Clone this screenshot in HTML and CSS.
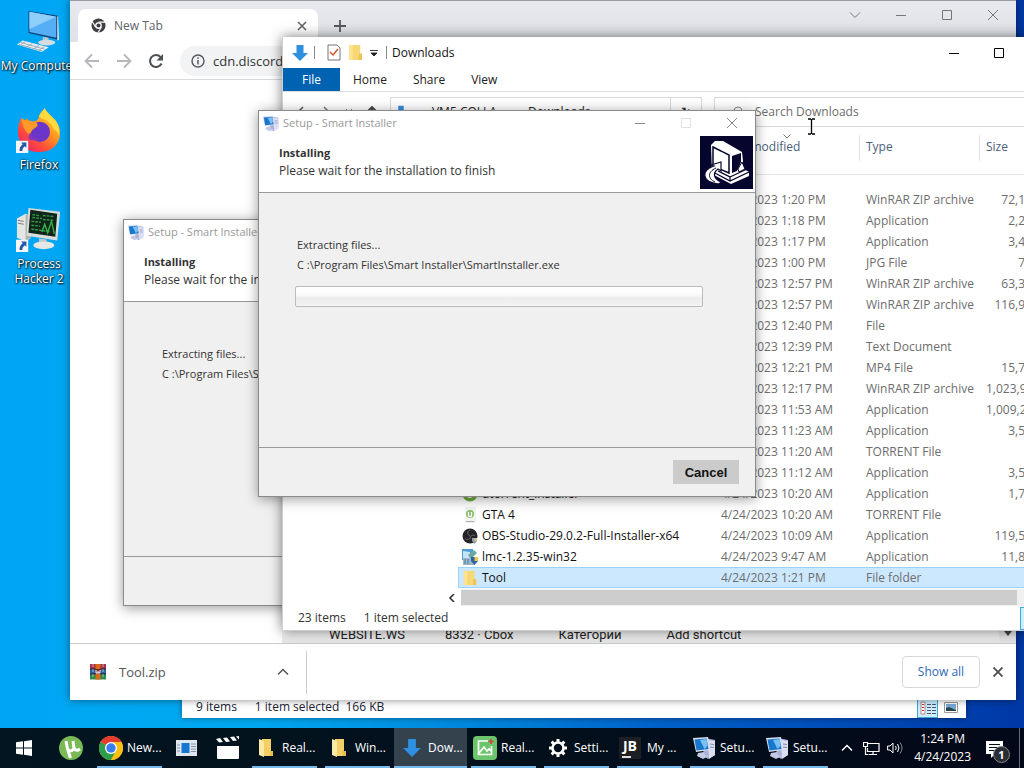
FILE: index.html
```html
<!DOCTYPE html>
<html lang="en">
<head>
<meta charset="utf-8">
<title>Desktop</title>
<link rel="stylesheet" href="styles.css">
</head>
<body>
<svg class="defs" aria-hidden="true">
  <defs>
    <linearGradient id="fox" x1="1" y1="0" x2="0.2" y2="1"><stop offset="0" stop-color="#fff04a"/><stop offset="0.45" stop-color="#ff9a1f"/><stop offset="0.75" stop-color="#ff4a3c"/><stop offset="1" stop-color="#e8246b"/></linearGradient>
    <symbol id="i-setup" viewBox="0 0 24 24">
      <path d="M13 2l10 2v15l-7 4-5-4z" fill="#a9afd6"/><path d="M16 4l7 1v14l-6 4z" fill="#dcdff2"/>
      <path d="M18 8l4 .5M18 11l4 .5" stroke="#7d86b5"/>
      <path d="M1 2l15-1 2 13-14 2z" fill="#d8ddf0"/><path d="M2.500 3.500l12-1 2 10.500-12 1.500z" fill="#1777cc"/><path d="M8 4l6.500-1 1 7-3 3z" fill="#79c1f5"/>
      <path d="M6 17l6-1 1 3 4 1-6 3-6-3z" fill="#c4c9e4"/>
    </symbol>
    <symbol id="i-down" viewBox="0 0 18 18"><path d="M5.500 1h7v8H17l-8 8-8-8h4.500z" fill="#2f8fe0"/></symbol>
    <symbol id="i-folder" viewBox="0 0 16 18"><path d="M1 1h12v16H1z" fill="#f7d774"/><path d="M1 1h4v16H1z" fill="#fbe391"/><path d="M12 10h3v7h-4z" fill="#eec455"/></symbol>
    <symbol id="i-folder-open" viewBox="0 0 16 20"><path d="M4 1h9v12l2 2v3H4z" fill="#f4cf66"/><path d="M1 1l5 2v16l-5-2z" fill="#fbe9a6"/><path d="M12 13h3v5h-3z" fill="#e9bb4c"/></symbol>
    <symbol id="i-close" viewBox="0 0 12 12"><path d="M1 1l10 10M11 1L1 11" fill="none" stroke="currentColor"/></symbol>
    <symbol id="i-max" viewBox="0 0 12 12"><path d="M1.500 1.500h9v9h-9z" fill="none" stroke="currentColor"/></symbol>
    <symbol id="i-min" viewBox="0 0 12 12"><path d="M1 6.500h10" stroke="currentColor"/></symbol>
    <symbol id="i-chev" viewBox="0 0 12 12"><path d="M1 3.500l5 5 5-5" fill="none" stroke="currentColor"/></symbol>
    <symbol id="i-up" viewBox="0 0 12 12"><path d="M1 8.500l5-5 5 5" fill="none" stroke="currentColor" stroke-width="1.500"/></symbol>
    <symbol id="i-back" viewBox="0 0 16 16"><path d="M15 8H2M8 1.500L1.500 8 8 14.500" fill="none" stroke="currentColor" stroke-width="1.800"/></symbol>
    <symbol id="i-shortcut" viewBox="0 0 12 12"><path d="M0 0h12v12H0z" fill="#f4f6f8"/><path d="M5 2h5v5L8.500 5.500Q6 7 6 10H3.500Q3 6 6.500 3.500z" fill="#2458a8"/></symbol>
  </defs>
</svg>
<main class="desktop">
  <ul class="shortcuts">
    <li>
      <svg class="big" viewBox="0 0 48 48"><path d="M13 3l31 5v25L13 26z" fill="#0d3f78"/><path d="M14 4l28 5v22L14 25z" fill="#56aef4"/><path d="M14 4l28 5L14 22z" fill="#8fd0fb"/><path d="M44 8l1 25-2 1V9z" fill="#cfdce6"/><path d="M28 30l6 1v4h-6z" fill="#b9c4cd"/><ellipse cx="32" cy="36" rx="9" ry="3" fill="#d5dde3"/><path d="M1 38l6-4 27 7-7 5z" fill="#e9eef2"/><path d="M5 36l25 7M3 38l25 7M10 35l-5 3M17 37l-6 4M24 39l-6 4M30 40l-6 4" stroke="#9babb8" fill="none"/></svg>
      <span class="nowrap">My Computer</span>
    </li>
    <li>
      <svg class="big" viewBox="0 0 48 48"><path d="M24 47C10 47 2 37 2 26 2 20 3 15 6 11l3 5 2-4c2 2 5 3 8 3 4-1 5-4 5-6 2-4 5-6 6-8 1 4 5 6 8 10 5 4 8 10 8 16 0 12-9 20-22 20z" fill="url(#fox)"/><path d="M30 1c1 4 5 6 8 10 5 4 8 10 7 19-2-5-4-6-6-7-2-9-12-10-15-13 2-5 5-6 6-9z" fill="#ffd93d"/><circle cx="25" cy="26" r="10.500" fill="#6a35c8"/><path d="M6 12c6 3 12 3 15 4 2 2 2 4 0 5l-4 3-3 5c-5-4-8-10-8-17z" fill="#ff9a28"/><path d="M14 27c2 4 6 6 11 5-3 3-8 4-12 1z" fill="#8038c0"/><use href="#i-shortcut" x="0" y="35" width="13" height="13"/></svg>
      <span>Firefox</span>
    </li>
    <li>
      <svg class="big" viewBox="0 0 48 48"><path d="M1 13l9-5 5 2v24l-5 3-9-4z" fill="#e4e6e4"/><path d="M10 9l5 1v24l-5 3z" fill="#aeb4b0"/><path d="M2 15l6 1M2 18l6 1" stroke="#777"/><path d="M13 2l33 4-3 30-32-5z" fill="#d9ddd9"/><path d="M15 4l28 4-2 24-28-4z" fill="#10241a"/><path d="M17 9l8 1M17 12l10 1M16 16l10 1M16 20l9 1M16 24l20 3M28 10l12 1M28 14l11 1" stroke="#2f9a45" stroke-width="1.500" stroke-dasharray="3 1"/><path d="M27 27l3-8 3 9 4-12 3 13" fill="none" stroke="#34b048" stroke-width="1.500"/><path d="M24 34l8 1v5h-8z" fill="#c3c8c4"/><ellipse cx="29" cy="41" rx="11" ry="4" fill="#e4e7e4"/><use href="#i-shortcut" x="0" y="35" width="13" height="13"/></svg>
      <span>Process Hacker 2</span>
    </li>
  </ul>

  <section class="window realfolder" aria-label="Folder">
    <footer class="rf-status">
      <span class="rf-count">9 items</span><span>1 item selected</span><span>166 KB</span>
      <span class="rf-views">
        <button class="view-btn on" aria-label="Details view"><svg width="18" height="14" viewBox="0 0 18 14"><path d="M2 1h4v12H2z" fill="#fff" stroke="#b88"/><path d="M3 3.500h2M3 6.500h2M3 9.500h2" stroke="#b33"/><path d="M8 3.500h4M13 3.500h4M8 6.500h4M13 6.500h4M8 9.500h4M13 9.500h4M8 12.500h4M13 12.500h4" stroke="#557"/></svg></button>
        <button class="view-btn" aria-label="Large icons"><svg width="14" height="12" viewBox="0 0 14 12"><path d="M.5.5h13v10H.5z" fill="#fff" stroke="#999"/><path d="M2 2h10v7H2z" fill="#79a9d8"/><path d="M2 6l3-1 7 3v1H2z" fill="#23484c"/></svg></button>
      </span>
    </footer>
  </section>

  <section class="window chrome" aria-label="New Tab">
    <header class="tabstrip">
      <div class="tab">
        <svg width="15" height="15" viewBox="0 0 16 16"><circle cx="8" cy="8" r="7.500" fill="#3c4043"/><circle cx="8" cy="8" r="3.600" fill="#fff"/><circle cx="8" cy="8" r="2.200" fill="#3c4043"/><path d="M8 4.400h7M4.900 9.800L1.500 4M11.100 9.800L7.500 15.500" stroke="#fff" stroke-width="1.200"/></svg>
        <span class="tab-title">New Tab</span>
        <button class="plain" aria-label="Close tab"><svg width="10" height="10" viewBox="0 0 10 10"><path d="M1 1l8 8M9 1L1 9" stroke="#5f6368" stroke-width="1.600"/></svg></button>
      </div>
      <button class="plain newtab" aria-label="New tab"><svg width="12" height="12" viewBox="0 0 12 12"><path d="M6 0v12M0 6h12" stroke="#55595e" stroke-width="1.800"/></svg></button>
      <div class="chrome-ctl">
        <button class="plain" aria-label="Search tabs"><svg width="12" height="12"><use href="#i-chev"/></svg></button>
        <button class="plain" aria-label="Minimize"><svg width="12" height="12"><use href="#i-min"/></svg></button>
        <button class="plain" aria-label="Maximize"><svg width="12" height="12"><use href="#i-max"/></svg></button>
        <button class="plain" aria-label="Close"><svg width="12" height="12"><use href="#i-close"/></svg></button>
      </div>
    </header>
    <div class="toolbar">
      <button class="plain dim" aria-label="Back"><svg width="16" height="16"><use href="#i-back"/></svg></button>
      <button class="plain dim flip" aria-label="Forward"><svg width="16" height="16"><use href="#i-back"/></svg></button>
      <button class="plain" aria-label="Reload"><svg width="16" height="16" viewBox="0 0 16 16"><path d="M13.500 10.500A6 6 0 1 1 12.500 4" fill="none" stroke="#4c5054" stroke-width="2"/><path d="M15 1v6.500H8.500z" fill="#4c5054"/></svg></button>
      <label class="omni"><svg width="14" height="14" viewBox="0 0 14 14"><circle cx="7" cy="7" r="6" fill="none" stroke="#55595e" stroke-width="1.400"/><path d="M7 6v4.500M7 3.200v1.500" stroke="#55595e" stroke-width="1.500"/></svg><input type="text" value="cdn.discord" aria-label="Address"></label>
    </div>
    <div class="page">
      <nav class="tiles"><a href="#">WEBSITE.WS</a><a href="#">8332 · Cbox</a><a href="#">Категории</a><a href="#">Add shortcut</a></nav>
      <div class="page-scroll"><svg width="8" height="5" viewBox="0 0 8 5"><path d="M0 0h8L4 5z" fill="#444"/></svg></div>
    </div>
    <footer class="downloads-bar">
      <div class="dl-item">
        <svg width="16" height="16" viewBox="0 0 16 16"><path d="M0 0h16v5H0z" fill="#a8324a"/><path d="M0 5h16v5H0z" fill="#2f5fb0"/><path d="M0 10h16v5.500H0z" fill="#2d8a4a"/><path d="M0 5h16M0 10h16" stroke="#1c1c2c"/><path d="M3 0v16M13 0v16" stroke="#ddd" stroke-width=".7" stroke-dasharray="3 2"/><path d="M5.500 0h5v15.500h-5z" fill="#d96a1c"/><path d="M5 5h6v5H5z" fill="#6a2c20"/><path d="M6 6v3h4V6M8 7v2" fill="none" stroke="#fff"/></svg>
        <span class="dl-name">Tool.zip</span>
        <button class="plain" aria-label="More"><svg width="12" height="12"><use href="#i-up"/></svg></button>
      </div>
      <button class="showall">Show all</button>
      <button class="plain dl-close" aria-label="Close"><svg width="10" height="10" viewBox="0 0 10 10"><path d="M.5.5l9 9M9.500.5l-9 9" stroke="#4a4e52" stroke-width="1.800"/></svg></button>
    </footer>
  </section>

  <section class="window dialog dialog-back" aria-label="Setup - Smart Installer">
    <header class="dlg-title"><svg width="17" height="17"><use href="#i-setup"/></svg><span>Setup - Smart Installer</span></header>
    <div class="dlg-head"><div class="dlg-text"><h2>Installing</h2><p>Please wait for the installation to finish</p></div></div>
    <div class="dlg-body"><p>Extracting files...</p><p>C :\Program Files\Smart Installer\SmartInstaller.exe</p></div>
    <div class="dlg-foot"></div>
  </section>

  <section class="window explorer" aria-label="Downloads">
    <header class="ex-title">
      <svg width="18" height="18"><use href="#i-down"/></svg><i class="bar"></i>
      <svg class="q" width="14" height="17" viewBox="0 0 14 17"><path d="M1 1h9l3 3v12H1z" fill="#fff" stroke="#777"/><path d="M3 8l3 3 5-6" fill="none" stroke="#d2552d" stroke-width="1.500"/></svg>
      <svg class="q" width="15" height="17"><use href="#i-folder"/></svg>
      <svg class="q" width="8" height="8" viewBox="0 0 8 8"><path d="M0 1.500h8M1 4h6L4 7z" stroke="#222" fill="#222" stroke-width=".9"/></svg>
      <i class="bar"></i><span class="ex-name">Downloads</span>
      <span class="ex-ctl"><button class="plain" aria-label="Minimize"><svg width="12" height="12"><use href="#i-min"/></svg></button><button class="plain" aria-label="Maximize"><svg width="12" height="12"><use href="#i-max"/></svg></button></span>
    </header>
    <nav class="ribbon"><button class="file">File</button><button>Home</button><button>Share</button><button>View</button></nav>
    <div class="addr-row">
      <div class="arrows">
        <svg width="12" height="12" viewBox="0 0 12 12"><path d="M8 1L3 6l5 5" fill="none" stroke="#555" stroke-width="1.500"/></svg>
        <svg width="12" height="12" viewBox="0 0 12 12"><path d="M4 1l5 5-5 5" fill="none" stroke="#777" stroke-width="1.500"/></svg>
        <svg width="8" height="12" viewBox="0 0 8 12"><path d="M1 3l3 3 3-3" fill="none" stroke="#777"/></svg>
        <svg width="12" height="12" viewBox="0 0 12 12"><path d="M6 12V2M1 6l5-5 5 5" fill="none" stroke="#444" stroke-width="1.800"/></svg>
      </div>
      <div class="crumbs"><svg width="14" height="18"><use href="#i-down"/></svg><span>«</span><span>VM5 COLLA...</span><span>›</span><span>Downloads</span><span>›</span><span class="refresh">↻</span></div>
      <label class="search"><svg width="12" height="12" viewBox="0 0 12 12"><circle cx="7" cy="5" r="4" fill="none" stroke="#888"/><path d="M4 8l-3 3" stroke="#888"/></svg><input type="text" placeholder="Search Downloads" aria-label="Search Downloads"></label>
    </div>
    <div class="files">
      <table>
        <thead><tr><th class="n">Name</th><th class="d">Date modified<svg class="sort" width="8" height="5" viewBox="0 0 8 5"><path d="M.5.5L4 4 7.500.5" fill="none" stroke="#777"/></svg></th><th class="t">Type</th><th class="s">Size</th></tr></thead>
        <tbody>
          <tr><td></td><td>4/24/2023 1:20 PM</td><td>WinRAR ZIP archive</td><td>72,106 KB</td></tr>
          <tr><td></td><td>4/24/2023 1:18 PM</td><td>Application</td><td>2,216 KB</td></tr>
          <tr><td></td><td>4/24/2023 1:17 PM</td><td>Application</td><td>3,496 KB</td></tr>
          <tr><td></td><td>4/24/2023 1:00 PM</td><td>JPG File</td><td>796 KB</td></tr>
          <tr><td></td><td>4/24/2023 12:57 PM</td><td>WinRAR ZIP archive</td><td>63,396 KB</td></tr>
          <tr><td></td><td>4/24/2023 12:57 PM</td><td>WinRAR ZIP archive</td><td>116,986 KB</td></tr>
          <tr><td></td><td>4/24/2023 12:40 PM</td><td>File</td><td>16 KB</td></tr>
          <tr><td></td><td>4/24/2023 12:39 PM</td><td>Text Document</td><td>1 KB</td></tr>
          <tr><td></td><td>4/24/2023 12:21 PM</td><td>MP4 File</td><td>15,766 KB</td></tr>
          <tr><td></td><td>4/24/2023 12:17 PM</td><td>WinRAR ZIP archive</td><td>1,023,996 KB</td></tr>
          <tr><td></td><td>4/24/2023 11:53 AM</td><td>Application</td><td>1,009,296 KB</td></tr>
          <tr><td></td><td>4/24/2023 11:23 AM</td><td>Application</td><td>3,506 KB</td></tr>
          <tr><td></td><td>4/24/2023 11:20 AM</td><td>TORRENT File</td><td>9 KB</td></tr>
          <tr><td></td><td>4/24/2023 11:12 AM</td><td>Application</td><td>3,506 KB</td></tr>
          <tr><td><svg width="16" height="16" viewBox="0 0 16 16"><circle cx="8" cy="8" r="7.500" fill="#6fae3c"/><path d="M5 4v6q3 2 5 0V4" fill="none" stroke="#fff" stroke-width="2"/></svg>utorrent_installer</td><td>4/24/2023 10:20 AM</td><td>Application</td><td>1,736 KB</td></tr>
          <tr><td><svg width="16" height="16" viewBox="0 0 16 16"><path d="M3 0h11v16H3z" fill="#f1f3f0"/><circle cx="8" cy="7" r="4" fill="#8bbd68"/><path d="M6.500 5v4q2 1 3 0V5" fill="none" stroke="#fff" stroke-width="1.300"/><path d="M4 14.500h8" stroke="#a9b0a6"/></svg>GTA 4</td><td>4/24/2023 10:20 AM</td><td>TORRENT File</td><td>16 KB</td></tr>
          <tr><td><svg width="16" height="16" viewBox="0 0 16 16"><circle cx="8" cy="8" r="7.500" fill="#242427"/><path d="M8 2c-3 1-3 5 0 6M13 8c-2-2-5 0-5 3M3 10c1 2 4 2 5 0" fill="none" stroke="#6c6d73"/><path d="M10 10h5v3l-2.500 3-2.500-3z" fill="#8c9fc0"/><path d="M12.500 10H15v3h-2.500z" fill="#d8c070"/></svg>OBS-Studio-29.0.2-Full-Installer-x64</td><td>4/24/2023 10:09 AM</td><td>Application</td><td>119,536 KB</td></tr>
          <tr><td><svg width="16" height="16" viewBox="0 0 16 16"><path d="M0 0h11v11H0z" fill="#4f9bd8"/><path d="M1 2l7 1v6H1z" fill="#c4e4f7"/><path d="M1 9h12v7H1z" fill="#9fb6c4"/><path d="M3 10v5M6 10v5" stroke="#4a7fae"/><path d="M6 6l6-5 3 3-6 6z" fill="#6da8a0"/><path d="M9 8h7v4l-3.500 4L9 12z" fill="#2c63a5"/><path d="M12.500 8H16v4h-3.500z" fill="#e8c848"/></svg>lmc-1.2.35-win32</td><td>4/24/2023 9:47 AM</td><td>Application</td><td>11,866 KB</td></tr>
          <tr class="sel"><td><svg width="16" height="16"><use href="#i-folder"/></svg>Tool</td><td>4/24/2023 1:21 PM</td><td>File folder</td><td></td></tr>
        </tbody>
      </table>
      <div class="hscroll"><svg width="8" height="8" viewBox="0 0 8 8"><path d="M6 0L2 4l4 4" fill="none" stroke="#333" stroke-width="1.600"/></svg><i class="thumb"></i></div>
    </div>
    <footer class="ex-status"><span>23 items</span><span>1 item selected</span><i class="ex-view"></i></footer>
  </section>

  <section class="window dialog dialog-front" aria-label="Setup - Smart Installer">
    <header class="dlg-title"><svg width="17" height="17"><use href="#i-setup"/></svg><span>Setup - Smart Installer</span>
      <div class="dlg-ctl"><button class="plain" aria-label="Minimize"><svg width="12" height="12"><use href="#i-min"/></svg></button><button class="plain off" aria-label="Maximize" disabled><svg width="12" height="12"><use href="#i-max"/></svg></button><button class="plain" aria-label="Close"><svg width="12" height="12"><use href="#i-close"/></svg></button></div>
    </header>
    <div class="dlg-head"><div class="dlg-text"><h2>Installing</h2><p>Please wait for the installation to finish</p></div>
      <svg class="dlg-logo" width="53" height="53" viewBox="0 0 53 53"><path d="M0 0h53v53H0z" fill="#05052e"/><path d="M11 9l4-4h8l19 11 1 9-1 7 7 4v4L31 48 12 38z" fill="#fff"/><path d="M13 11l16 8v18l-16-7z" fill="#fff" stroke="#05052e" stroke-width="1.500"/><path d="M32 20l9-3v9l-4 9-5 2z" fill="#05052e"/><path d="M38 33l4-7 3 7-6 3z" fill="#fff" stroke="#05052e"/><path d="M13 36l17 9 19-9M30 45v-4L18 35M30 41l17-8" fill="none" stroke="#05052e" stroke-width="1.300"/><path d="M11 29l10-3v9l-3-2c-6 4-4 10 3 13l-2 2C1 46 1 34 14 30z" fill="#fff" stroke="#05052e" stroke-width="1.200"/><path d="M16 32c-9 4-8 11-1 14" fill="none" stroke="#05052e"/></svg>
    </div>
    <div class="dlg-body"><p>Extracting files...</p><p>C :\Program Files\Smart Installer\SmartInstaller.exe</p><div class="progress" role="progressbar" aria-valuenow="0" aria-label="Progress"></div></div>
    <div class="dlg-foot"><button class="cancel">Cancel</button></div>
  </section>

  <svg class="cursor" width="9" height="17" viewBox="0 0 9 17"><path d="M1 1h3M5 1h3M4.500 1v15M1 16h3M5 16h3" stroke="#000" fill="none" stroke-width="1.300"/></svg>
</main>

<footer class="taskbar">
  <button class="start" aria-label="Start"><svg width="16" height="16" viewBox="0 0 16 16"><path d="M0 2.300L7 1.300V7.500H0zM8 1.200L16 0v7.500H8zM0 8.500h7v6.200L0 13.700zM8 8.500h8V16l-8-1.200z" fill="#fff"/></svg></button>
  <button class="pin first" aria-label="uTorrent"><svg width="24" height="24" viewBox="0 0 24 24"><circle cx="12" cy="12" r="12" fill="#79b956"/><path d="M7 5l1.500 8q3 4 6.500-.500L14 5M15 12q2 4 6 1M8.500 13l3 9" fill="none" stroke="#fff" stroke-width="3"/></svg></button>
  <button class="task"><svg width="24" height="24" viewBox="0 0 24 24"><circle cx="12" cy="12" r="12" fill="#fbbf12"/><path d="M12 12L1.600 6A12 12 0 0 1 22.400 6z" fill="#e33b2e"/><path d="M12 12L1.600 6A12 12 0 0 0 12 24l5-9z" fill="#2f9e4c"/><path d="M12 6h10.400A12 12 0 0 1 12 24l5-9z" fill="#fbbf12"/><circle cx="12" cy="12" r="6" fill="#fff"/><circle cx="12" cy="12" r="4.700" fill="#3a7df0"/></svg><span>New...</span></button>
  <button class="pin" aria-label="Program"><svg width="21" height="16" viewBox="0 0 21 16"><path d="M0 0h21v16H0z" fill="#dfe6ee"/><path d="M5.500 3h8v10h-8z" fill="#1677d2"/><path d="M1 5h3M1 8h3M1 11h3M15 4h5M15 6.500h5M15 9h5M15 11.500h5" stroke="#8493a8"/></svg></button>
  <button class="pin" aria-label="Clapper"><svg width="24" height="24" viewBox="0 0 24 24"><path d="M1 10h22v12q0 1-1 1H2q-1 0-1-1z" fill="#fff"/><path d="M0 3l4-1 3 4-4 .500zM7 2l4-.500 3 4-4 .500zM14 1l4-.500 3 4-4 .500zM20 .5l3-.500v3.500z" fill="#fff"/></svg></button>
  <button class="task"><svg width="24" height="20"><use href="#i-folder-open"/></svg><span>Real...</span></button>
  <button class="task"><svg width="24" height="20"><use href="#i-folder-open"/></svg><span>Win...</span></button>
  <button class="task active"><svg width="24" height="20"><use href="#i-down"/></svg><span>Dow...</span></button>
  <button class="task"><svg width="24" height="24" viewBox="0 0 24 24"><rect width="24" height="24" rx="4" fill="#6cc46c"/><path d="M15 5H5.500v13.500h13V10M6 17l5-6 3 4 2-2 3 3" fill="none" stroke="#fff" stroke-width="1.700"/><path d="M18 3v5M15.500 5.500h5" stroke="#d04a3a" stroke-width="1.700"/></svg><span>Real...</span></button>
  <button class="task"><svg width="24" height="20" viewBox="0 0 20 20"><circle cx="10" cy="10" r="5.500" fill="none" stroke="#fff" stroke-width="2.600"/><path d="M10 1v3M10 16v3M1 10h3M16 10h3M3.600 3.600l2.200 2.200M14.200 14.200l2.200 2.200M16.400 3.600l-2.200 2.200M5.800 14.200l-2.200 2.200" stroke="#fff" stroke-width="3"/></svg><span>Setti...</span></button>
  <button class="task"><span class="jb">JB</span><span>My ...</span></button>
  <button class="task"><svg width="24" height="24"><use href="#i-setup"/></svg><span>Setu...</span></button>
  <button class="task"><svg width="24" height="24"><use href="#i-setup"/></svg><span>Setu...</span></button>
  <div class="tray">
    <svg width="12" height="12"><use href="#i-up"/></svg>
    <svg width="17" height="15" viewBox="0 0 17 15"><path d="M5 2.500h11v8H4.500V7M10 10.500v3M6 13.500h8M.5 1.500h4v4h-4zM2.500 5.500v8h3" fill="none" stroke="#fff" stroke-width="1.200"/></svg>
    <svg width="17" height="14" viewBox="0 0 17 14"><path d="M.6 5h2.400l3-3v10l-3-3H.6z" fill="none" stroke="#fff"/><path d="M8.500 5q1.500 2 0 4M10.500 3q3 4 0 8" fill="none" stroke="#fff"/><path d="M13 1.500q4 5.500 0 11" fill="none" stroke="#889"/></svg>
    <div class="clock"><span>1:24 PM</span><span>4/24/2023</span></div>
    <button class="notif" aria-label="Notifications"><svg width="17" height="17" viewBox="0 0 17 17"><path d="M0 0h17v13H9l-4 4v-4H0z" fill="#fff"/><path d="M3 3.500h11M3 6.500h11M3 9.500h8" stroke="#06101e" stroke-width="1.200"/></svg><b>1</b></button>
  </div>
</footer>
</body>
</html>
```
FILE: styles.css
```css
* { box-sizing: border-box; }
body {
  margin: 0;
  height: 100vh;
  display: flex;
  flex-direction: column;
  overflow: hidden;
  font: 12px/16px "Open Sans", "Noto Sans", sans-serif;
  color: #222;
}
button, input { font: inherit; color: inherit; border: 0; background: none; padding: 0; margin: 0; }
p, h2, ul { margin: 0; padding: 0; }
svg { display: block; flex: none; }
.defs { position: absolute; width: 0; height: 0; }
.plain { display: grid; place-items: center; }

.desktop {
  flex: 1;
  position: relative;
  overflow: hidden;
  background: linear-gradient(to right, #00a6f4 0, #00a8f0 25%, #0088dc 45%, #0060c8 65%, #0038a6 100%);
}
.window { position: absolute; background: #fff; }

.shortcuts { list-style: none; width: 78px; color: #fff; text-shadow: 1px 1px 2px #000, 0 0 2px #000; }
.shortcuts li { display: flex; flex-direction: column; align-items: center; height: 99px; padding-top: 8px; text-align: center; line-height: 15px; }
.shortcuts .big { width: 46px; height: 46px; margin-bottom: 4px; }
.shortcuts .nowrap { white-space: nowrap; }

.realfolder { left: 182px; right: 58px; bottom: 10px; box-shadow: 0 0 6px #0006; }
.rf-status { display: flex; align-items: flex-end; gap: 6px; height: 40px; padding: 0 5px 0 14px; color: #223; }
.rf-status > span { padding-bottom: 3px; }
.rf-count { margin-right: 12px; }
.rf-views { display: flex; margin-left: auto; gap: 2px; }
.rf-status .rf-views { padding: 0; }
.view-btn { width: 21px; height: 20px; display: grid; place-items: center; }
.view-btn.on { background: #cceeff; border: 1px solid #3aa7d8; }

.chrome { left: 70px; right: 8px; top: 0; bottom: 28px; display: flex; flex-direction: column; border-top: 1px solid #9a9ba2; box-shadow: 0 0 8px #0007; }
.tabstrip { display: flex; height: 41px; padding: 8px 0 0 8px; background: linear-gradient(#e8e9ee, #dee1e6); }
.tab { display: flex; align-items: center; width: 240px; padding: 0 11px 0 13px; background: #fff; border-radius: 8px 8px 0 0; color: #606468; }
.tab-title { flex: 1; padding-left: 8px; }
.newtab { width: 44px; }
.chrome-ctl { display: flex; margin-left: auto; color: #777; height: 12px; }
.chrome-ctl .plain { width: 46px; }
.toolbar { display: flex; align-items: center; gap: 16px; height: 38px; padding-left: 14px; border-bottom: 1px solid #d8dadc; }
.dim { color: #b5b7ba; }
.flip { transform: scaleX(-1); }
.omni { display: flex; flex: 1; align-items: center; gap: 8px; height: 30px; padding-left: 11px; margin-right: 120px; border-radius: 15px; background: #f1f3f4; font-size: 13px; }
.omni input { flex: 1; color: #333; }
.page { flex: 1; display: flex; align-items: stretch; }
.tiles { flex: 1; display: flex; align-items: flex-end; gap: 40px; padding-left: 259px; background: linear-gradient(#0000, #0000001a) bottom right / calc(100% - 212px) 18px no-repeat; font: 13px/16px Roboto, sans-serif; }
.tiles a { color: #222; text-decoration: none; }
.tiles a:nth-child(n+3) { margin-left: 5px; }
.page-scroll { width: 17px; display: grid; place-items: end center; padding-bottom: 7px; background: #e4e4e6; }
.downloads-bar { display: flex; align-items: center; height: 57px; border-top: 1px solid #c9cbce; padding-right: 12px; }
.dl-item { display: flex; align-items: center; width: 237px; height: 43px; padding: 0 17px 0 20px; border-right: 1px solid #ccc; font-size: 13px; color: #555; }
.dl-name { flex: 1; padding-left: 13px; }
.showall { width: 78px; height: 32px; margin-left: auto; border: 1px solid #d5d8dc; border-radius: 4px; color: #2f68b5; }
.dl-close { width: 12px; margin-left: 12px; }

.dialog { display: flex; flex-direction: column; width: 498px; border: 1px solid #8a8a8a; background: #f0f0f0; box-shadow: 0 2px 12px #0006; color: #333; }
.dialog-front { left: 258px; top: 110px; }
.dialog-back { left: 123px; top: 219px; }
.dlg-title { display: flex; align-items: center; gap: 4px; height: 24px; padding-left: 3px; background: #fff; color: #999; font-size: 11px; }
.dlg-ctl { display: flex; margin-left: auto; color: #888; }
.dlg-ctl .plain { width: 46px; }
.off { opacity: 0.25; }
.dlg-head { display: flex; justify-content: space-between; height: 58px; padding: 1px 2px 0 20px; background: #fff; border-bottom: 1px solid #999; }
.dlg-text { padding-top: 8px; }
.dlg-text h2 { font-size: 11px; line-height: 18px; }
.dlg-text p { line-height: 18px; }
.dlg-body { height: 254px; padding: 42px 52px 0 38px; font-size: 11px; line-height: 20px; }
.progress { height: 21px; margin: 11px 0 0 -2px; border: 1px solid #bcbcbc; border-radius: 2px; background: linear-gradient(#fff, #fafafa 40%, #ececec 60%, #f4f4f4); }
.dlg-foot { display: flex; justify-content: flex-end; height: 49px; padding: 12px 16px 0 0; border-top: 1px solid #999; }
.cancel { width: 66px; height: 24px; background: #cbcbcb; color: #111; font: bold 13px "Liberation Sans", sans-serif; }

.explorer { left: 282px; right: -60px; top: 37px; border: 1px solid #d0d0d0; border-top: 0; box-shadow: 0 0 12px #0008; }
.ex-title { display: flex; align-items: center; height: 31px; padding: 0 0 0 8px; color: #111; }
.bar { width: 1px; height: 13px; margin: 0 5px; background: #888; }
.ex-title .q { margin-left: 7px; }
.ex-title .q + .bar { margin-left: 8px; }
.ex-ctl { display: flex; margin-left: auto; padding-right: 62px; color: #000; }
.ex-ctl .plain { width: 45px; }
.ribbon { display: flex; height: 24px; border-bottom: 1px solid #ddd; }
.ribbon button { padding: 0 13px; }
.ribbon .file { width: 57px; background: #0063b1; color: #fff; }
.addr-row { display: flex; height: 35px; padding: 5px 0 0; gap: 12px; }
.arrows { display: flex; align-items: center; justify-content: space-between; width: 95px; padding: 0 0 0 12px; }
.crumbs { display: flex; align-items: center; gap: 9px; width: 312px; border: 1px solid #d9d9d9; padding-left: 3px; }
.refresh { margin-left: auto; width: 31px; align-self: stretch; padding-top: 6px; border-left: 1px solid #d9d9d9; text-align: center; }
.search { display: flex; align-items: center; flex: 1; gap: 12px; padding-left: 16px; border: 1px solid #d9d9d9; color: #666; }
.search input { flex: 1; }
.search input::placeholder { color: #6d6d6d; opacity: 1; }

.files { margin-left: 161px; }
table { width: 100%; padding-left: 14px; table-layout: fixed; border-collapse: separate; border-spacing: 0; }
th { position: relative; height: 48px; padding: 0 0 7px 7px; text-align: left; font-weight: normal; color: #4c607a; border-bottom: 1px solid #e5e5e5; }
th.n { width: 256px; padding-left: 8px; }
th.d { width: 145px; }
th.t { width: 120px; }
th:not(.n) { background: linear-gradient(#e0e0e0, #e0e0e0) 0 8px / 1px 26px no-repeat; }
.sort { position: absolute; left: 69px; top: 7px; }
tbody::before { content: ""; display: block; height: 14px; }
td { height: 21px; padding: 0 0 0 7px; color: #6d6d6d; white-space: nowrap; line-height: 18px; }
td:first-child { color: #111; padding-left: 4px; }
td:first-child svg { display: inline-block; vertical-align: middle; margin-right: 4px; }
td:last-child { text-align: right; padding-right: 26px; }
.sel td { background: #cce8ff; border: solid #99d1ff; border-width: 1px 0; }
.sel td:first-child { border-left-width: 1px; padding-left: 3px; }
.hscroll { display: flex; align-items: center; height: 17px; gap: 5px; padding-left: 4px; margin-top: 1px; background: linear-gradient(to right, #fff 0, #fff 17px, #f0f0f0 17px); }
.thumb { flex: 1; height: 15px; margin-right: 66px; background: #cdcdcd; }
.ex-status { display: flex; align-items: center; gap: 18px; height: 24px; padding-left: 15px; color: #333; }
.ex-view { width: 63px; height: 23px; margin-left: auto; background: #cceeff; border: 1px solid #3aa7d8; }

.cursor { position: absolute; left: 807px; top: 118px; }

.taskbar { display: flex; height: 40px; background: linear-gradient(to right, #021520, #02101c 50%, #020818); color: #fff; }
.start { width: 48px; display: grid; place-items: center; }
.pin { width: 41px; display: grid; place-items: center; }
.pin.first { width: 45px; }
.task { display: flex; align-items: center; gap: 4px; width: 73px; padding: 0 0 0 6px; position: relative; white-space: nowrap; }
.task::after { content: ""; position: absolute; left: 4px; right: 4px; bottom: 0; height: 2px; background: #76b9ed; }
.task.active { background: #34424e; }
.task.active::after { left: 0; right: 0; }
.jb { width: 22px; height: 22px; margin-right: 2px; font: bold 14px/17px "Open Sans", sans-serif; text-align: center; background: linear-gradient(#ddd, #ddd) 3px 19px / 9px 2px no-repeat #1d1f22; }
.tray { display: flex; align-items: center; gap: 7px; margin-left: auto; padding-right: 4px; }
.tray > svg:first-child { margin-right: 3px; }
.clock { display: flex; flex-direction: column; align-items: center; margin-left: 3px; line-height: 18px; }
.notif { position: relative; width: 42px; height: 40px; padding: 3px 0 0 8px; border-right: 1px solid #667; }
.notif b { position: absolute; left: 15px; top: 18px; width: 17px; height: 17px; border: 1px solid #888; border-radius: 50%; background: #2a2d34; line-height: 15px; font-size: 11px; }
```
